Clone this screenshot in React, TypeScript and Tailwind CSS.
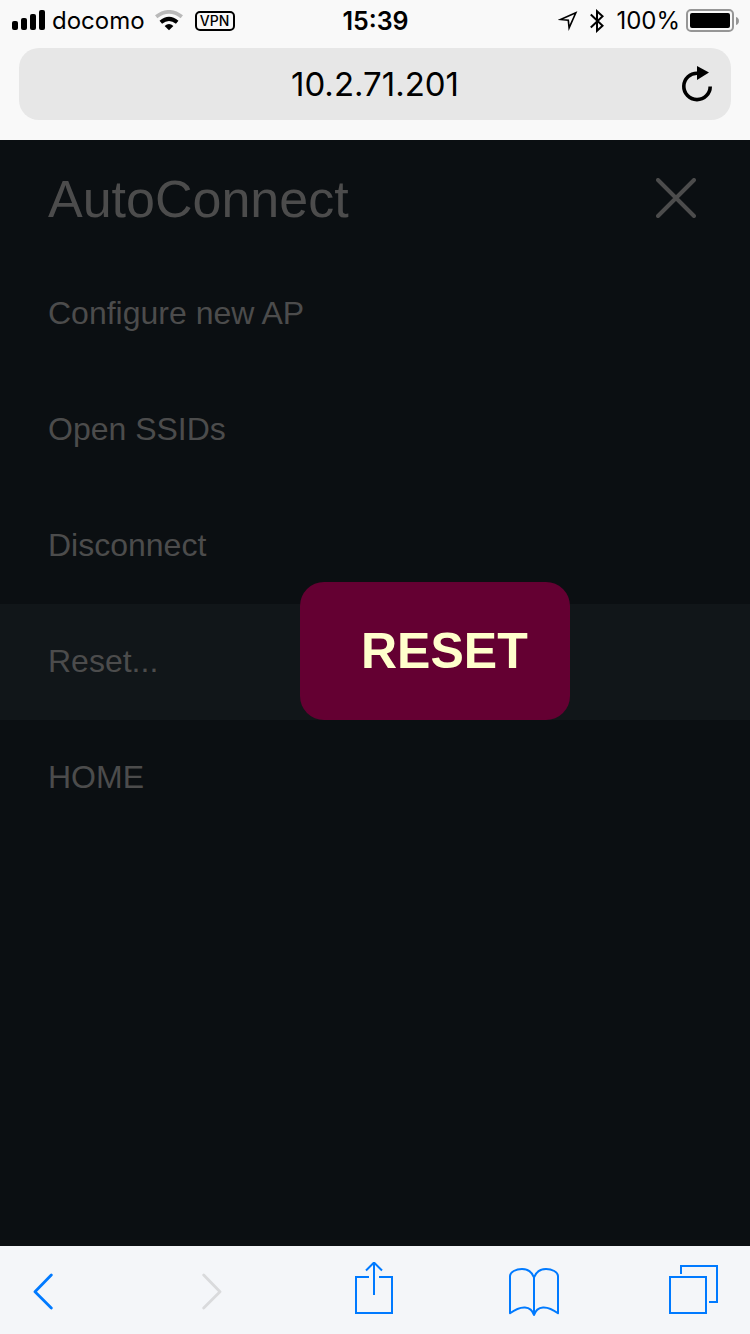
import React from "react";

const menuItems = [
  { label: "Configure new AP", href: "#config" },
  { label: "Open SSIDs", href: "#open" },
  { label: "Disconnect", href: "#disconnect" },
  { label: "Reset...", href: "#reset", active: true },
  { label: "HOME", href: "#home" },
];

function StatusBar() {
  return (
    <div className="grid h-10 grid-cols-[1fr_auto_1fr] items-center pt-0.5 pr-[11px] pl-3 text-[24px] leading-9">
      <div className="flex items-center">
        <svg width="33" height="22" viewBox="0 0 33 22" aria-label="Signal strength">
          <rect x="0" y="11" width="6" height="9" rx="2" />
          <rect x="9" y="8" width="6" height="12" rx="2" />
          <rect x="18" y="4" width="6" height="16" rx="2" />
          <rect x="27" y="0" width="6" height="20" rx="2" />
        </svg>
        <span className="ml-[7px]">docomo</span>
        <svg className="ml-2.5" width="28" height="22" viewBox="0 0 28 22" aria-label="Wi-Fi">
          <path d="M1.2 6.8Q14-3 26.800 6.800" fill="none" stroke="#b9b9b9" strokeWidth="3.8" />
          <path d="M5.800 12.200Q14 5.600 22.200 12.200" fill="none" stroke="#000" strokeWidth="4" />
          <path d="M9.600 16Q14 12 18.400 16L14 20.300Z" />
        </svg>
        <span className="ml-3 flex h-5 w-10 items-center justify-center rounded-[5px] border-2 border-black text-[14px] leading-4 font-medium">
          VPN
        </span>
      </div>
      <time className="text-[25px] font-semibold">15:39</time>
      <div className="flex items-center justify-end">
        <svg width="20" height="20" viewBox="0 0 20 20" aria-label="Location">
          <path d="M17.800 1.800 2.500 8.500l7.800.8.800 7.600Z" fill="none" stroke="#000" strokeWidth="1.600" />
        </svg>
        <svg className="ml-3" width="14" height="24" viewBox="0 0 14 24" aria-label="Bluetooth">
          <path d="M.8 5.500 12.600 16.700 7 21.800V2.200L12.600 7.300.8 18.500" fill="none" stroke="#000" strokeWidth="2" />
        </svg>
        <span className="ml-3">100%</span>
        <svg className="ml-1.5" width="53" height="24" viewBox="0 0 53 24" aria-label="Battery">
          <rect x="1" y="1" width="46" height="21" rx="4" fill="none" stroke="#969696" strokeWidth="2" />
          <rect x="4" y="4" width="40" height="15" rx="2" />
          <path d="M50 8a4.200 4.200 0 0 1 0 8Z" fill="#969696" />
        </svg>
      </div>
    </div>
  );
}

function AddressBar() {
  return (
    <div className="px-[19px] pt-2 pb-5">
      <div className="relative flex h-[72px] items-center rounded-[20px] bg-[#e7e7e7]">
        <input
          type="text"
          aria-label="Address"
          defaultValue="10.2.71.201"
          className="h-full w-full min-w-0 bg-transparent px-16 text-center text-[33px] outline-none"
        />
        <button type="button" aria-label="Reload" className="absolute right-[17px] bottom-[17px]">
          <svg className="block" width="34" height="38" viewBox="0 0 34 38">
            <path d="M17.500 8.200A13.200 13.200 0 1 0 30.200 21.400" fill="none" stroke="#000" strokeWidth="3.600" />
            <path d="M17 1v14L29 7.500Z" />
          </svg>
        </button>
      </div>
    </div>
  );
}

function Menu() {
  return (
    <main className="flex-1 bg-[#0b0f12] font-['Liberation_Sans',Arial,sans-serif] text-[#4c4c4c]">
      <header className="flex h-[116px] items-center justify-between pr-[54px] pl-12">
        <h1 className="pt-0.5 text-[52px] leading-none">AutoConnect</h1>
        <button type="button" aria-label="Close menu">
          <svg className="block" width="40" height="40" viewBox="0 0 40 40">
            <path d="M2 2 38 38M38 2 2 38" stroke="#4c4c4c" strokeWidth="4" strokeLinecap="round" />
          </svg>
        </button>
      </header>
      <nav>
        <ul>
          {menuItems.map((item) => (
            <li key={item.label} className={item.active ? "relative bg-[#111619]" : ""}>
              <a href={item.href} className="flex h-[116px] items-center px-12 pb-0.5 text-[32px]">
                {item.label}
              </a>
              {item.active && (
                <button
                  type="button"
                  className="absolute bottom-0 left-2/5 h-[138px] rounded-3xl bg-[#640032] pr-[42px] pl-[61px] text-[50px] font-bold text-[#ffffcc]"
                >
                  RESET
                </button>
              )}
            </li>
          ))}
        </ul>
      </nav>
    </main>
  );
}

function Toolbar() {
  return (
    <footer className="flex h-[88px] items-center justify-between bg-[#f4f6f9] pr-[31px] pl-[11px]">
      <button type="button" aria-label="Back" className="flex w-16 justify-center">
        <svg width="20" height="56" viewBox="0 0 20 56" fill="none" stroke="#007aff" strokeWidth="2.800" strokeLinecap="round">
          <path d="M18.300 13 2 29.800 18.300 46" strokeLinejoin="round" />
        </svg>
      </button>
      <button type="button" aria-label="Forward" disabled className="flex w-[54px] justify-center">
        <svg width="20" height="56" viewBox="0 0 20 56" fill="none" stroke="#d9dadc" strokeWidth="2.800" strokeLinecap="round">
          <path d="M1.700 13 18 29.800 1.700 46" strokeLinejoin="round" />
        </svg>
      </button>
      <button type="button" aria-label="Share" className="flex w-[50px] justify-center">
        <svg width="38" height="56" viewBox="0 0 38 56" fill="none" stroke="#007aff" strokeWidth="2">
          <path d="M14 15H1v36h36V15H24M19 33V1.200M11 8.500l8-8 8 8" />
        </svg>
      </button>
      <button type="button" aria-label="Bookmarks" className="flex w-[50px] justify-center">
        <svg width="50" height="56" viewBox="0 0 50 56" fill="none" stroke="#007aff" strokeWidth="2" strokeLinejoin="round">
          <path d="M25 15.500C23 10 18.500 7 13 7 7 7 1 10 1 14v37.300C12 43 22 43.500 25 53 28 43.500 38 43 49 51.300V14c0-4-6-7-12-7-5.500 0-10 3-12 8.500V53" />
        </svg>
      </button>
      <button type="button" aria-label="Tabs" className="flex w-[50px] justify-center">
        <svg width="50" height="56" viewBox="0 0 50 56" fill="none" stroke="#007aff" strokeWidth="2">
          <path d="M1 15h36v36H1ZM12 12V4h36v36h-8" />
        </svg>
      </button>
    </footer>
  );
}

export default function App() {
  return (
    <div className="flex min-h-screen flex-col bg-[#f9f9f9] font-[Inter,sans-serif] text-black">
      <StatusBar />
      <AddressBar />
      <Menu />
      <Toolbar />
    </div>
  );
}
